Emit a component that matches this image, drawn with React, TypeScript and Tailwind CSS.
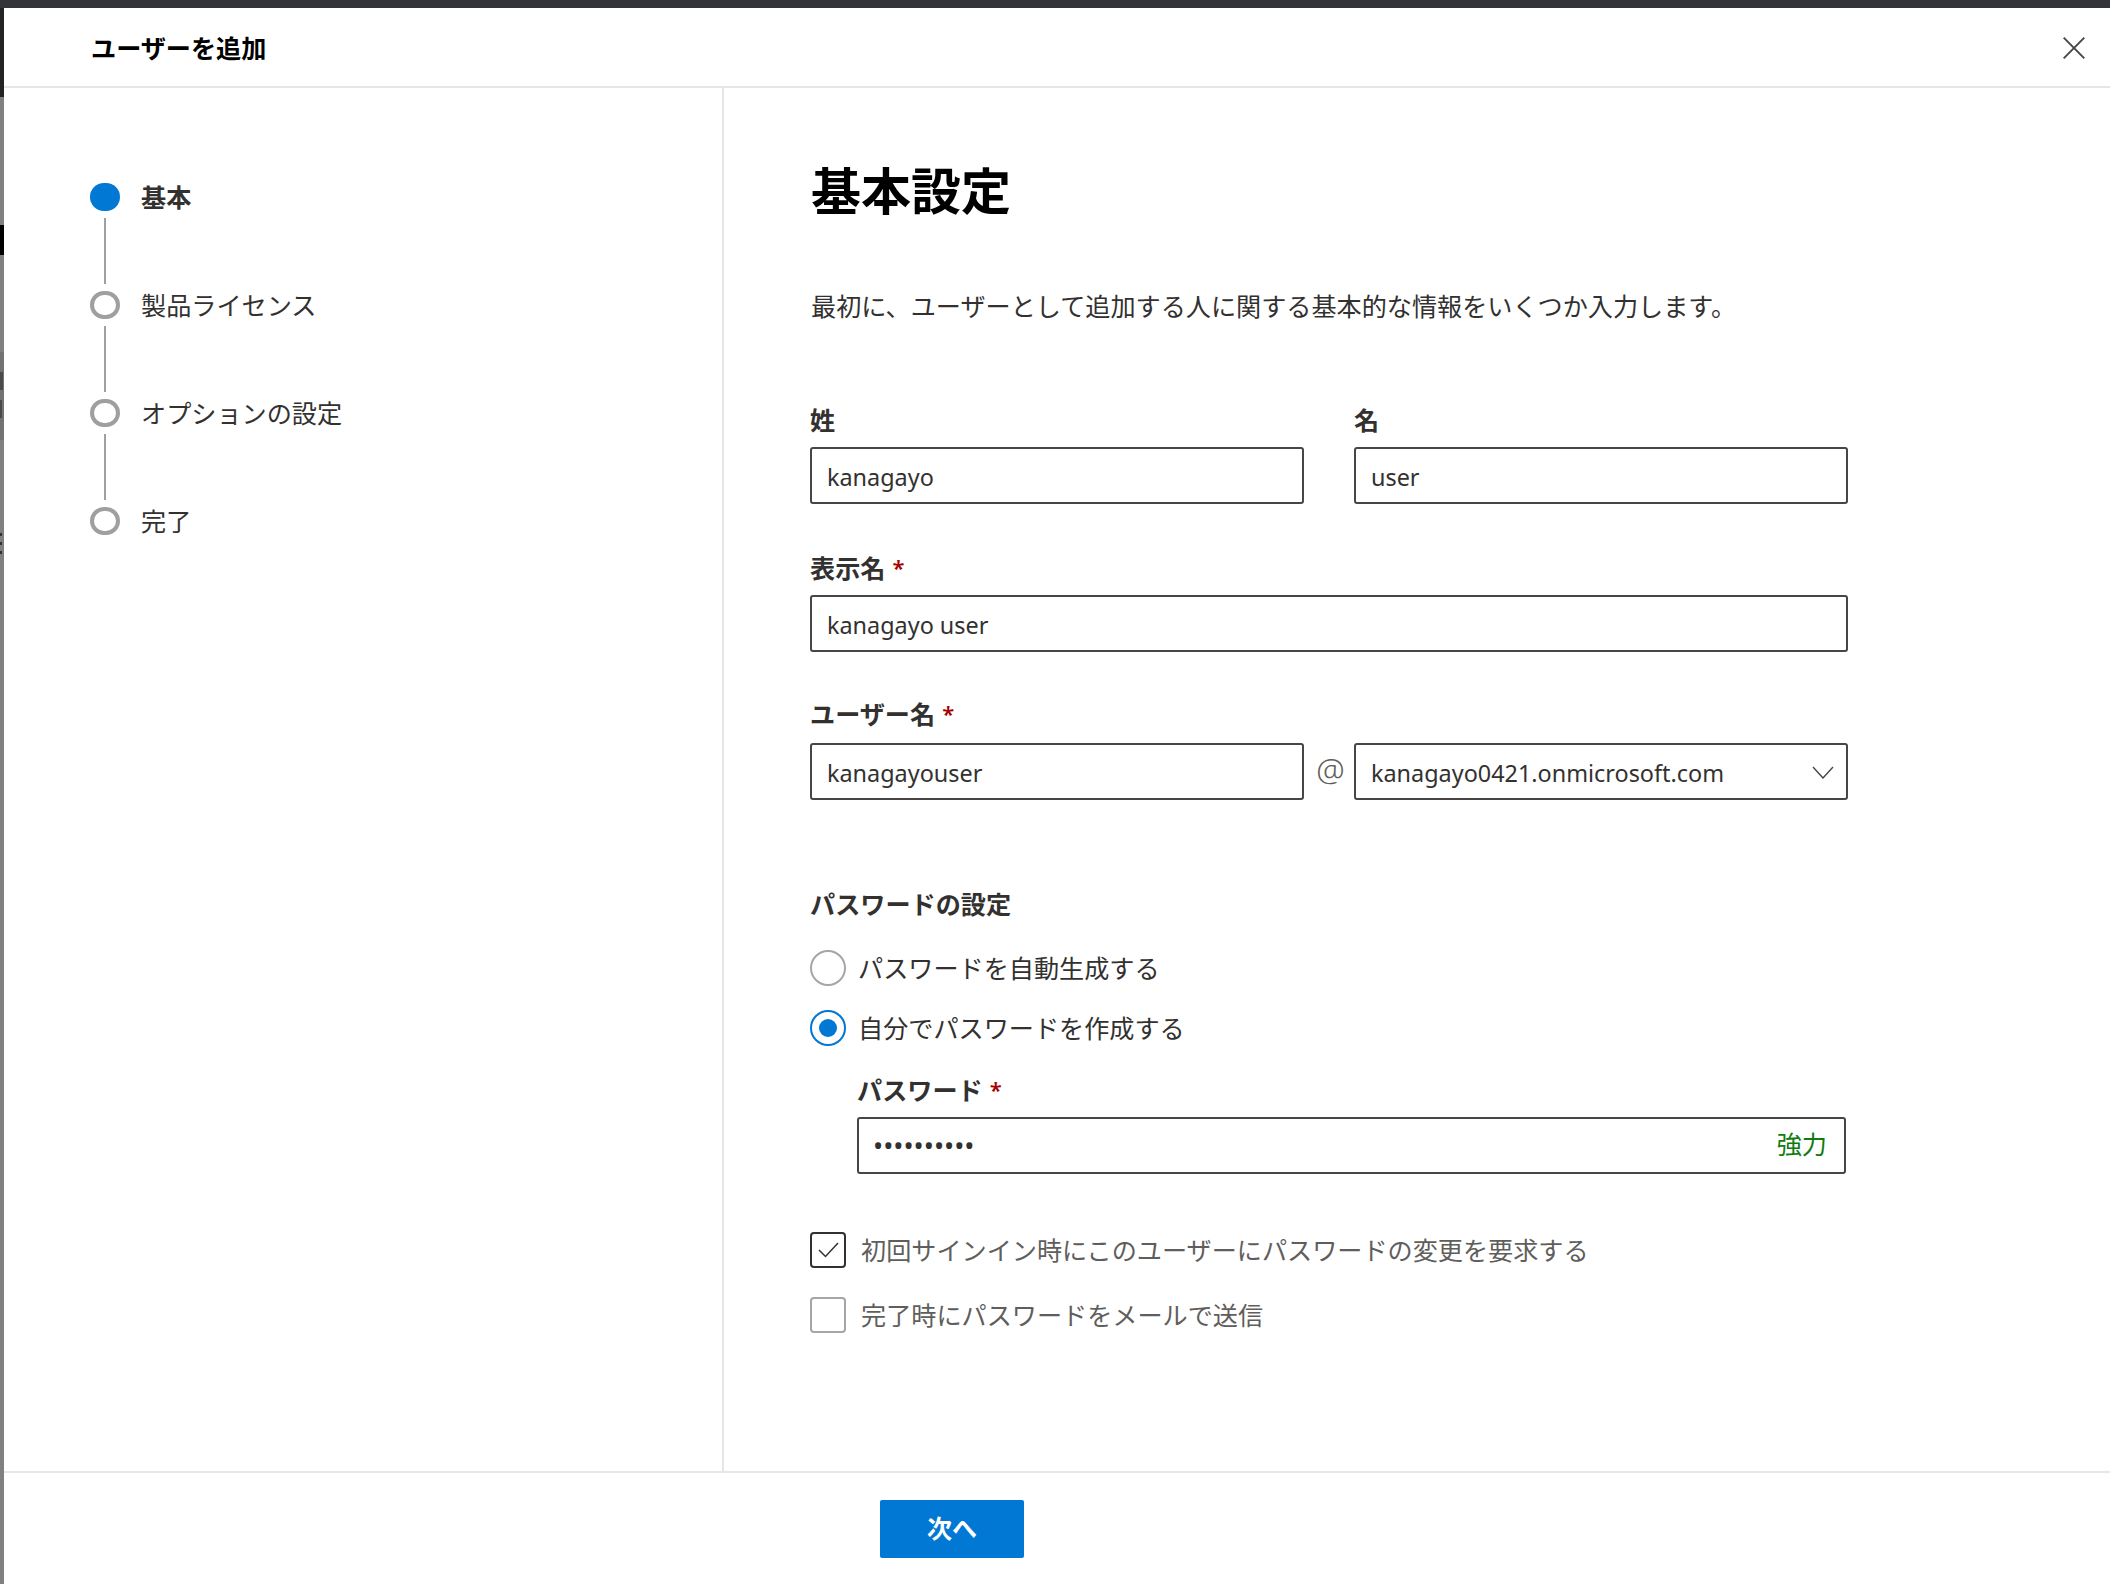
const font = "font-['Noto_Sans','Noto_Sans_CJK_JP',sans-serif]";

function Field({ label, required, value, className }: { label?: string; required?: boolean; value: string; className?: string }) {
  return (
    <input
      readOnly
      value={value}
      aria-label={label}
      aria-required={required}
      className={`h-[57px] w-full rounded-[3px] border-2 border-[#484644] bg-white px-[15px] pt-[3px] text-[23.4px] leading-[32px] text-[#323130] outline-none ${font} ${className ?? ""}`}
    />
  );
}

function Label({ text, required, className }: { text: string; required?: boolean; className?: string }) {
  return (
    <div className={`flex h-[32px] items-center text-[25.14px] leading-[32px] font-semibold text-[#323130] ${className ?? ""}`}>
      <span>{text}</span>
      {required && <span className="mb-[2px] ml-[7px] text-[22px] text-[#a80000]">*</span>}
    </div>
  );
}

function Step({ text, active, last }: { text: string; active?: boolean; last?: boolean }) {
  return (
    <div className="flex flex-col">
      <div className="flex h-[28px] items-center gap-[21px]">
        <div className={`h-[28px] w-[30px] rounded-full ${active ? "bg-[#0078d4]" : "border-[4px] border-[#a19f9d] bg-white"}`} />
        <span className={`text-[25.14px] leading-[32px] text-[#323130] ${active ? "font-semibold" : ""}`}>{text}</span>
      </div>
      {!last && <div className="my-[7px] ml-[14px] h-[66px] w-[2px] bg-[#a19f9d]" />}
    </div>
  );
}

function Radio({ text, checked }: { text: string; checked?: boolean }) {
  return (
    <div className="flex h-[36px] items-center gap-[12px]">
      <div className={`flex h-[36px] w-[36px] items-center justify-center rounded-full border-2 bg-white ${checked ? "border-[#0078d4]" : "border-[#a6a6a6]"}`}>
        {checked && <div className="h-[18px] w-[18px] rounded-full bg-[#0078d4]" />}
      </div>
      <span className="text-[25.14px] leading-[32px] text-[#323130]">{text}</span>
    </div>
  );
}

function Check({ text, checked }: { text: string; checked?: boolean }) {
  return (
    <div className="flex h-[36px] items-center gap-[15px]">
      <div className={`flex h-[36px] w-[36px] items-center justify-center rounded-[4px] border-2 bg-white ${checked ? "border-[#323130]" : "border-[#a6a6a6]"}`}>
        {checked && (
          <svg width="21" height="16" viewBox="0 0 21 16" fill="none" stroke="#323130" strokeWidth="1.5">
            <path d="M1 8l6.5 6.5L20 1" />
          </svg>
        )}
      </div>
      <span className="text-[25.14px] leading-[32px] text-[#605e5c]">{text}</span>
    </div>
  );
}

export default function App() {
  return (
    <div className={`flex h-[1584px] w-[2110px] flex-col overflow-hidden bg-white ${font}`}>
      <div className="h-[8px] shrink-0 bg-[#323439]" />
      <div className="flex min-h-0 flex-1">
        <div className="flex w-[4px] shrink-0 flex-col bg-[#808080]">
          <div className="h-[89px] bg-[#242424]" />
          <div className="h-[128px]" />
          <div className="h-[30px] bg-black" />
          <div className="h-[97px]" />
          <div className="h-[88px] bg-[#737373] pt-[20px]">
            <div className="h-[18px] w-[3px] bg-[#4a4a4a]" />
            <div className="mt-[10px] h-[18px] w-[2px] bg-[#4a4a4a]" />
          </div>
          <div className="h-[93px]" />
          <div className="flex flex-col gap-[6px]">
            <div className="h-[3px] w-[2px] bg-[#333333]" />
            <div className="h-[3px] w-[2px] bg-[#333333]" />
            <div className="h-[3px] w-[2px] bg-[#333333]" />
          </div>
        </div>
        <div className="flex min-w-0 flex-1 flex-col">
          <header className="flex h-[80px] shrink-0 items-center justify-between border-b-2 border-[#e6e6e6] pl-[87px] pr-[25px] pt-[1px]">
            <h2 className="text-[25.14px] leading-[32px] font-semibold text-black">ユーザーを追加</h2>
            <svg width="22" height="22" viewBox="0 0 22 22" fill="none" stroke="#484644" strokeWidth="1.9">
              <path d="M0.7 0.7l20.6 20.6M21.3 0.7L0.7 21.3" />
            </svg>
          </header>
          <div className="flex min-h-0 flex-1">
            <nav className="w-[720px] shrink-0 border-r-2 border-[#e6e6e6] pl-[86px] pt-[95px]">
              <Step text="基本" active />
              <Step text="製品ライセンス" />
              <Step text="オプションの設定" />
              <Step text="完了" last />
            </nav>
            <main className="min-w-0 flex-1 pl-[87px] pt-[70px]">
              <h1 className="text-[50px] leading-[66px] font-bold text-black">基本設定</h1>
              <p className="mt-[66px] text-[25.14px] leading-[32px] text-[#323130]">最初に、ユーザーとして追加する人に関する基本的な情報をいくつか入力します。</p>
              <div className="mt-[82px] -ml-[1px] w-[1038px]">
                <div className="grid grid-cols-2 gap-x-[50px]">
                  <div>
                    <Label text="姓" className="mb-[11px]" />
                    <Field label="姓" value="kanagayo" />
                  </div>
                  <div>
                    <Label text="名" className="mb-[11px]" />
                    <Field label="名" value="user" />
                  </div>
                </div>
                <Label text="表示名" required className="mt-[48px] mb-[11px]" />
                <Field label="表示名" required value="kanagayo user" />
                <Label text="ユーザー名" required className="mt-[46px] mb-[13px]" />
                <div className="flex items-center">
                  <Field label="ユーザー名" required value="kanagayouser" className="!w-[494px]" />
                  <span className="mb-[5px] w-[50px] pl-[3px] text-center text-[32px] leading-[32px] font-light text-[#605e5c]">@</span>
                  <div className="flex h-[57px] flex-1 items-center justify-between rounded-[3px] border-2 border-[#484644] pl-[15px] pr-[12px] pt-[3px] text-[23.4px] leading-[32px] text-[#323130]">
                    <span>kanagayo0421.onmicrosoft.com</span>
                    <svg width="22" height="13" viewBox="0 0 22 13" fill="none" stroke="#484644" strokeWidth="1.4" className="mb-[2px]">
                      <path d="M1 1l10 11L21 1" />
                    </svg>
                  </div>
                </div>
                <Label text="パスワードの設定" className="mt-[88px] mb-[30px]" />
                <div className="flex flex-col gap-[24px]">
                  <Radio text="パスワードを自動生成する" />
                  <Radio text="自分でパスワードを作成する" checked />
                </div>
                <div className="ml-[47px] mr-[2px]">
                  <Label text="パスワード" required className="mt-[28px] mb-[11px]" />
                  <div className="flex h-[57px] items-center rounded-[3px] border-2 border-[#484644] pl-[14px] pr-[17px]">
                    <input readOnly type="password" value="kanagayo12" aria-label="パスワード" className="min-w-0 flex-1 pt-[2px] text-[27px] text-[#323130] outline-none" />
                    <span className="mb-[4px] text-[25.14px] leading-[32px] text-[#107c10]">強力</span>
                  </div>
                </div>
                <div className="mt-[58px] flex flex-col gap-[29px]">
                  <Check text="初回サインイン時にこのユーザーにパスワードの変更を要求する" checked />
                  <Check text="完了時にパスワードをメールで送信" />
                </div>
              </div>
            </main>
          </div>
          <footer className="flex h-[113px] shrink-0 items-start border-t-2 border-[#e6e6e6] pl-[876px] pt-[27px]">
            <button className="h-[58px] w-[144px] rounded-[2px] bg-[#0078d4] text-[25px] font-semibold text-white">次へ</button>
          </footer>
        </div>
      </div>
    </div>
  );
}
